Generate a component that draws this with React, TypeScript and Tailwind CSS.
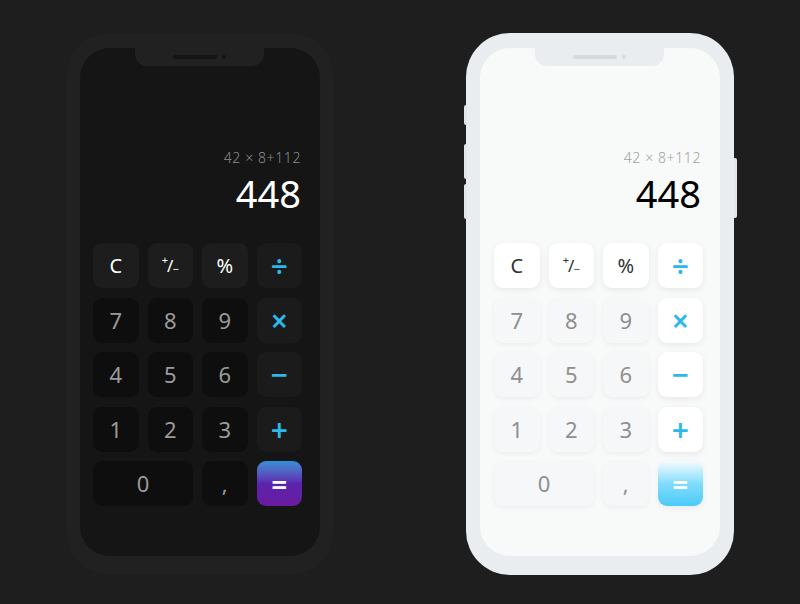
import React from "react";

type Theme = "dark" | "light";

type Key = {
  label: React.ReactNode;
  kind: "fn" | "num" | "op" | "eq";
  wide?: boolean;
};

const PlusMinus = () => (
  <span className="relative inline-flex items-center">
    <span className="text-[11px] -translate-y-[5px]">+</span>
    <span className="text-[17px] -mx-[1px]">/</span>
    <span className="text-[11px] translate-y-[4px]">−</span>
  </span>
);

const keys: Key[] = [
  { label: "C", kind: "fn" },
  { label: <PlusMinus />, kind: "fn" },
  { label: "%", kind: "fn" },
  { label: "÷", kind: "op" },
  { label: "7", kind: "num" },
  { label: "8", kind: "num" },
  { label: "9", kind: "num" },
  { label: "×", kind: "op" },
  { label: "4", kind: "num" },
  { label: "5", kind: "num" },
  { label: "6", kind: "num" },
  { label: "−", kind: "op" },
  { label: "1", kind: "num" },
  { label: "2", kind: "num" },
  { label: "3", kind: "num" },
  { label: "+", kind: "op" },
  { label: "0", kind: "num", wide: true },
  { label: ",", kind: "num" },
  { label: "=", kind: "eq" },
];

const keyStyles: Record<Theme, Record<Key["kind"], string>> = {
  dark: {
    fn: "bg-[#1d1d1d] text-white",
    num: "bg-[#0e0e0e] text-[#9b9b9b]",
    op: "bg-[#1b1b1b] text-[#2cb8e8]",
    eq: "bg-gradient-to-b from-[#2f8fd6] via-[#5a24ad] to-[#6a1a9e] text-white",
  },
  light: {
    fn: "bg-white text-[#333] shadow-[0_2px_6px_rgba(0,0,0,0.07)]",
    num: "bg-[#f6f7f8] text-[#8f8f8f] shadow-[0_2px_5px_rgba(0,0,0,0.05)]",
    op: "bg-white text-[#2cb8ea] shadow-[0_2px_6px_rgba(0,0,0,0.07)]",
    eq: "bg-gradient-to-b from-[#f4fbfe] via-[#7fdcfb] to-[#48cbf7] text-white shadow-[0_2px_6px_rgba(0,0,0,0.06)]",
  },
};

function CalcKey({ k, theme }: { k: Key; theme: Theme }) {
  const size =
    k.kind === "op"
      ? "text-[30px] font-semibold"
      : k.kind === "eq"
      ? "text-[28px] font-semibold"
      : k.kind === "fn"
      ? "text-[20px]"
      : "text-[22px]";
  return (
    <div
      className={`${k.wide ? "col-span-2" : ""} h-[45px] rounded-[9px] flex items-center justify-center ${size} ${keyStyles[theme][k.kind]}`}
    >
      {k.label}
    </div>
  );
}

function Phone({ theme }: { theme: Theme }) {
  const dark = theme === "dark";
  return (
    <div
      className={`relative w-[268px] h-[542px] rounded-[44px] px-[14px] pt-[15px] ${
        dark ? "bg-[#212121]" : "bg-[#e9edf0]"
      }`}
    >
      {/* side buttons */}
      {!dark && (
        <>
          <div className="absolute left-[-2px] top-[72px] w-[3px] h-[20px] rounded-l-[2px] bg-[#e3e7ea]" />
          <div className="absolute left-[-2px] top-[111px] w-[3px] h-[35px] rounded-l-[2px] bg-[#e3e7ea]" />
          <div className="absolute left-[-2px] top-[151px] w-[3px] h-[35px] rounded-l-[2px] bg-[#e3e7ea]" />
          <div className="absolute right-[-3px] top-[125px] w-[3px] h-[60px] rounded-r-[2px] bg-[#e3e7ea]" />
        </>
      )}

      <div
        className={`relative w-[240px] h-[508px] rounded-[30px] overflow-hidden flex flex-col ${
          dark ? "bg-[#151515]" : "bg-[#f8f9f9]"
        }`}
      >
        {/* notch */}
        <div
          className={`absolute left-[55px] top-0 w-[129px] h-[18px] rounded-b-[12px] flex items-center justify-center gap-[5px] ${
            dark ? "bg-[#212121]" : "bg-[#e9edf0]"
          }`}
        >
          <div className={`w-[44px] h-[4px] rounded-full ${dark ? "bg-[#141414]" : "bg-[#d6dade]"}`} />
          <div className={`w-[4px] h-[4px] rounded-full ${dark ? "bg-[#141414]" : "bg-[#d6dade]"}`} />
        </div>

        <div className="flex flex-col items-end pr-[19px] pt-[101px] font-['Noto_Sans',sans-serif]">
          <div
            className={`text-[14px] leading-[18px] tracking-[0.6px] font-light ${dark ? "text-[#8a8a8a]" : "text-[#a2a2a2]"}`}
          >
            42 × 8+112
          </div>
          <div className={`mt-[4px] text-[38px] leading-[44px] ${dark ? "text-white" : "text-black"}`}>
            448
          </div>
        </div>

        <div
          className={`${dark ? "ml-[13px]" : "ml-[14px]"} mt-[28px] w-[209px] grid grid-cols-4 gap-x-[9px] gap-y-[9.5px] font-['Noto_Sans',sans-serif]`}
        >
          {keys.map((k, i) => (
            <CalcKey key={i} k={k} theme={theme} />
          ))}
        </div>
      </div>
    </div>
  );
}

export default function App() {
  return (
    <div className="w-[800px] h-[604px] bg-[#1e1e1e] flex items-start pl-[66px] pt-[33px] gap-[132px] overflow-hidden">
      <Phone theme="dark" />
      <Phone theme="light" />
    </div>
  );
}
